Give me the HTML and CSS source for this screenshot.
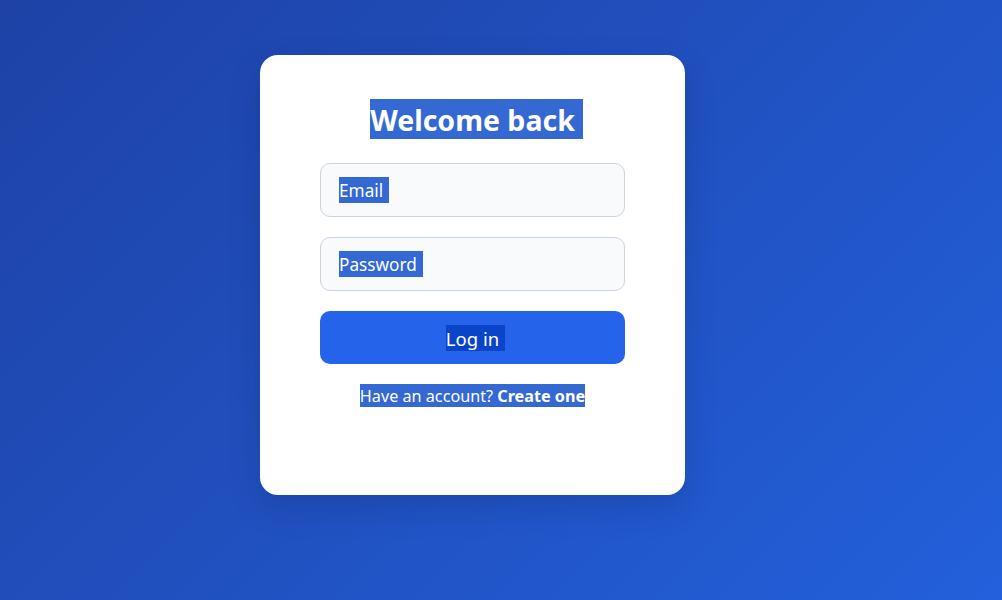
FILE: index.html
```html
<!DOCTYPE html>
<html lang="en">
<head>
<meta charset="utf-8">
<title>Log in</title>
<link rel="stylesheet" href="styles.css">
</head>
<body>
<main class="card">
  <h1 class="title"><span class="sel sel-title">Welcome back</span></h1>
  <form class="form">
    <div class="field"><span class="sel sel-field">Email</span></div>
    <div class="field"><span class="sel sel-field">Password</span></div>
    <button type="button" class="btn"><span class="sel sel-btn">Log in</span></button>
  </form>
  <p class="foot"><span class="sel sel-foot">Have an account? <b>Create one</b></span></p>
</main>
</body>
</html>
```
FILE: styles.css
```css
* { box-sizing: border-box; }
html, body { margin: 0; height: 100%; }
body {
  background: linear-gradient(135deg, #1e42a6 0%, #2360db 100%);
  font-family: "Noto Sans", "Open Sans", sans-serif;
  padding: 55px 0 0 260px;
}
.card {
  width: 425px;
  height: 440px;
  background: #fff;
  border-radius: 18px;
  box-shadow: 0 12px 32px rgba(10, 20, 60, 0.18);
  padding: 44px 60px 0;
  display: flex;
  flex-direction: column;
}
.title {
  margin: 0 0 24px;
  text-align: center;
  font-size: 28.5px;
  font-weight: 700;
  line-height: 40px;
  height: 40px;
}
.sel {
  display: inline-block;
  background: #3468d2;
  color: #fff;
  vertical-align: top;
}
.sel-title { height: 40px; line-height: 42px; padding-right: 8px; margin-right: -8px; }
.form { display: flex; flex-direction: column; gap: 20px; }
.field {
  height: 54px;
  border: 1px solid #cbd5e1;
  border-radius: 10px;
  background: #f8fafc;
  padding: 0 18px;
  display: flex;
  align-items: center;
}
.sel-field { font-size: 17.2px; height: 26px; line-height: 27px; padding-right: 6px; }
.btn {
  height: 53px;
  border: 0;
  border-radius: 10px;
  background: #2563eb;
  font-family: inherit;
  padding: 0;
  display: flex;
  align-items: center;
  justify-content: center;
}
.sel-btn { font-size: 18.5px; height: 26px; line-height: 27px; padding-right: 6px; margin-left: 6px; background: #0a44c8; }
.foot {
  margin: 20px 0 0;
  text-align: center;
  line-height: 23px;
}
.sel-foot { font-size: 16.2px; height: 23px; line-height: 24px; }
.sel-foot b { font-weight: 700; }
```
